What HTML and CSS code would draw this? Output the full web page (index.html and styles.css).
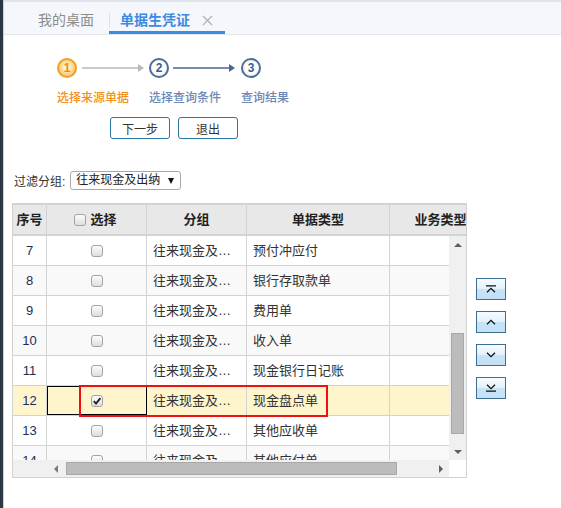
FILE: index.html
```html
<!DOCTYPE html>
<html lang="zh-CN">
<head>
<meta charset="utf-8">
<title>单据生凭证</title>
<link rel="stylesheet" href="styles.css">
</head>
<body>
<div class="app">
  <div class="sidebar"></div>
  <div class="main">
    <div class="tabs">
      <div class="tab">我的桌面</div>
      <div class="tab active">单据生凭证<svg class="close" width="11" height="11" viewBox="0 0 11 11"><path d="M1 1L10 10M10 1L1 10" stroke="#b4b4b4" stroke-width="1.4" fill="none"/></svg></div>
    </div>

    <div class="steps">
      <div class="step-row">
        <span class="circle current">1</span>
        <svg class="conn" width="72" height="20" viewBox="0 0 72 20"><line x1="5" y1="10" x2="62" y2="10" stroke="#b8b8b8" stroke-width="1.5"/><polygon points="61,6 67,10 61,14" fill="#b8b8b8"/></svg>
        <span class="circle">2</span>
        <svg class="conn" width="72" height="20" viewBox="0 0 72 20"><line x1="4" y1="10" x2="61" y2="10" stroke="#4a6594" stroke-width="1.5"/><polygon points="60,6 66,10 60,14" fill="#4a6594"/></svg>
        <span class="circle">3</span>
      </div>
      <div class="labels">
        <span class="label current">选择来源单据</span>
        <span class="label">选择查询条件</span>
        <span class="label">查询结果</span>
      </div>
    </div>

    <div class="actions">
      <button class="btn">下一步</button>
      <button class="btn">退出</button>
    </div>

    <div class="filter">
      <span class="filter-label">过滤分组:</span>
      <div class="select">往来现金及出纳<span class="caret"></span></div>
    </div>

    <div class="grid-area">
      <div class="grid">
        <div class="row head">
          <div class="cell c-no">序号</div>
          <div class="cell c-chk"><span class="cb"></span>选择</div>
          <div class="cell c-grp">分组</div>
          <div class="cell c-type">单据类型</div>
          <div class="cell c-biz">业务类型</div>
        </div>
        <div class="grid-main">
          <div class="grid-body">
            <div class="row"><div class="cell c-no num">7</div><div class="cell c-chk"><span class="cb"></span></div><div class="cell c-grp txt">往来现金及出纳</div><div class="cell c-type txt">预付冲应付</div><div class="cell c-biz"></div></div>
            <div class="row alt"><div class="cell c-no num">8</div><div class="cell c-chk"><span class="cb"></span></div><div class="cell c-grp txt">往来现金及出纳</div><div class="cell c-type txt">银行存取款单</div><div class="cell c-biz"></div></div>
            <div class="row"><div class="cell c-no num">9</div><div class="cell c-chk"><span class="cb"></span></div><div class="cell c-grp txt">往来现金及出纳</div><div class="cell c-type txt">费用单</div><div class="cell c-biz"></div></div>
            <div class="row alt"><div class="cell c-no num">10</div><div class="cell c-chk"><span class="cb"></span></div><div class="cell c-grp txt">往来现金及出纳</div><div class="cell c-type txt">收入单</div><div class="cell c-biz"></div></div>
            <div class="row"><div class="cell c-no num">11</div><div class="cell c-chk"><span class="cb"></span></div><div class="cell c-grp txt">往来现金及出纳</div><div class="cell c-type txt">现金银行日记账</div><div class="cell c-biz"></div></div>
            <div class="row selected"><div class="cell c-no num">12</div><div class="cell c-chk focus"><span class="cb checked"><svg width="10" height="10" viewBox="0 0 10 10"><path d="M1.8 5.2L4 7.6L8.4 2.2" stroke="#222" stroke-width="1.9" fill="none"/></svg></span></div><div class="cell c-grp txt">往来现金及出纳</div><div class="cell c-type txt">现金盘点单</div><div class="cell c-biz"></div></div>
            <div class="row"><div class="cell c-no num">13</div><div class="cell c-chk"><span class="cb"></span></div><div class="cell c-grp txt">往来现金及出纳</div><div class="cell c-type txt">其他应收单</div><div class="cell c-biz"></div></div>
            <div class="row alt"><div class="cell c-no num">14</div><div class="cell c-chk"><span class="cb"></span></div><div class="cell c-grp txt">往来现金及出纳</div><div class="cell c-type txt">其他应付单</div><div class="cell c-biz"></div></div>
          </div>
          <div class="vscroll">
            <div class="sb-btn"><span class="tri up"></span></div>
            <div class="sb-track"><div class="vthumb"></div></div>
            <div class="sb-btn"><span class="tri down"></span></div>
          </div>
        </div>
        <div class="grid-foot">
          <div class="hscroll">
            <div class="frozen"></div>
            <div class="sb-btn h"><span class="tri left"></span></div>
            <div class="sb-track h"><div class="hthumb"></div></div>
            <div class="sb-btn h"><span class="tri right"></span></div>
          </div>
          <div class="corner"></div>
        </div>
        <div class="mark"></div>
      </div>

      <div class="movers">
        <button class="mv"><svg width="12" height="8" viewBox="0 0 12 8"><path d="M1 0.8H11M2 7.3L6 3.3L10 7.3" stroke="#111" stroke-width="1.3" fill="none"/></svg></button>
        <button class="mv"><svg width="12" height="8" viewBox="0 0 12 8"><path d="M2 6.3L6 2.3L10 6.3" stroke="#111" stroke-width="1.3" fill="none"/></svg></button>
        <button class="mv"><svg width="12" height="8" viewBox="0 0 12 8"><path d="M2 1.7L6 5.7L10 1.7" stroke="#111" stroke-width="1.3" fill="none"/></svg></button>
        <button class="mv"><svg width="12" height="8" viewBox="0 0 12 8"><path d="M2 0.7L6 4.7L10 0.7M1 7.2H11" stroke="#111" stroke-width="1.3" fill="none"/></svg></button>
      </div>
    </div>
  </div>
</div>
</body>
</html>
```

FILE: styles.css
```css
* { box-sizing: border-box; }

body {
  margin: 0;
  font-family: "Liberation Sans", "Noto Sans CJK SC", sans-serif;
  font-size: 13px;
  color: #333;
  background: #fff;
}

.app {
  display: flex;
  min-height: 508px;
}

.sidebar {
  width: 4px;
  flex: none;
  background: linear-gradient(to right, #2c3744 3px, #cfd3d8 3px);
}

.main {
  flex: 1;
  display: flex;
  flex-direction: column;
}

/* tabs */
.tabs {
  display: flex;
  height: 35px;
  border-top: 2px solid #e1e4e8;
  border-bottom: 1px solid #e3e7ec;
  background: #f4f7fb;
}

.tab {
  height: 32px;
  padding-top: 8px;
  line-height: 20px;
  font-size: 14px;
  color: #8c8c8c;
  margin-left: 34px;
  padding-right: 15px;
  position: relative;
}

.tab.active {
  margin-left: 0;
  padding-left: 11px;
  padding-right: 12px;
  color: #3b8be2;
  font-weight: bold;
  border-bottom: 3px solid #3b8be2;
  display: flex;
  align-items: flex-start;
}

.tab.active::before {
  content: "";
  position: absolute;
  left: 0;
  top: 11px;
  height: 15px;
  border-left: 1px solid #dcdfe4;
}

.close {
  margin-left: 12px;
  margin-top: 5px;
}

/* steps */
.steps {
  margin-top: 23px;
  margin-left: 53px;
}

.step-row {
  display: flex;
  align-items: center;
  height: 20px;
}

.circle {
  width: 20px;
  height: 20px;
  border-radius: 50%;
  border: 2px solid #4d6b9c;
  background: radial-gradient(circle at 50% 45%, #ffffff 40%, #e3eaf5 100%);
  color: #3d5a8c;
  font-weight: bold;
  font-size: 12px;
  line-height: 16px;
  text-align: center;
}

.circle.current {
  border-color: #f0a02a;
  background: radial-gradient(circle at 50% 45%, #fff2cc 20%, #f9c45a 80%, #f3a93a 100%);
  color: #e88a14;
}

.conn { display: block; flex: none; }

.labels {
  display: flex;
  margin-top: 12px;
  line-height: 16px;
  font-size: 12px;
  font-weight: 500;
}

.label {
  width: 92px;
  color: #6c87b4;
}

.label.current { color: #f39019; }

/* action buttons */
.actions {
  display: flex;
  gap: 8px;
  margin-top: 11px;
  margin-left: 106px;
}

.btn {
  width: 60px;
  height: 22px;
  padding: 0;
  border: 1px solid #2a78a6;
  border-radius: 3px;
  background: #fff;
  font-family: inherit;
  font-size: 12px;
  color: #333;
}

/* filter */
.filter {
  display: flex;
  align-items: center;
  margin-top: 32px;
  margin-left: 10px;
  font-size: 12px;
  height: 19px;
}

.filter-label { margin-right: 5px; }

.select {
  width: 111px;
  height: 19px;
  border: 1px solid #a9a9a9;
  border-radius: 3px;
  padding-left: 5px;
  line-height: 17px;
  display: flex;
  align-items: center;
  color: #222;
}

.caret {
  margin-left: 8px;
  width: 0;
  height: 0;
  border-left: 3px solid transparent;
  border-right: 3px solid transparent;
  border-top: 6px solid #111;
}

/* grid */
.grid-area {
  display: flex;
  margin-top: 13px;
  margin-left: 8px;
}

.grid {
  position: relative;
  width: 455px;
  border: 1px solid #d2d2d2;
  border-top: 2px solid #d2d2d2;
}

.row {
  display: grid;
  grid-template-columns: 34px 100px 100px 143px 102px;
  height: 30px;
  border-bottom: 1px solid #d3d3d3;
  background: #fff;
  white-space: nowrap;
}

.row.alt { background: #f9f9f9; }
.row.selected { background: #fef5cd; }

.row.head {
  height: 31px;
  border-bottom: 2px solid #d3d3d3;
  background: #e8e8e8;
  overflow: hidden;
  font-weight: bold;
  color: #222;
}

.cell {
  border-right: 1px solid #d3d3d3;
  line-height: 29px;
  overflow: hidden;
}

.head .cell {
  text-align: center;
  display: flex;
  align-items: center;
  justify-content: center;
  gap: 4px;
}

.head .c-chk { padding-right: 2px; }

.c-no.num {
  text-align: center;
  color: #1e2c52;
}

.c-chk {
  display: flex;
  align-items: center;
  justify-content: center;
}

.c-chk.focus {
  outline: 1px solid #000;
  outline-offset: -1px;
}

.txt {
  padding-left: 6px;
  padding-right: 12px;
  text-overflow: ellipsis;
  color: #333;
}

.c-type.txt { padding-right: 4px; }

.cb {
  display: inline-flex;
  align-items: center;
  justify-content: center;
  width: 12px;
  height: 12px;
  border: 1px solid #a3a3a3;
  border-radius: 3px;
  background: linear-gradient(#fcfcfc, #dedede);
}

.grid-main {
  display: flex;
  height: 224px;
}

.grid-body {
  width: 436px;
  overflow: hidden;
}

.vscroll {
  width: 17px;
  background: #f0f0f0;
  display: flex;
  flex-direction: column;
}

.sb-btn {
  height: 17px;
  flex: none;
  display: flex;
  align-items: center;
  justify-content: center;
}

.sb-btn.h {
  width: 17px;
  height: 17px;
}

.sb-track { flex: 1; }

.vthumb {
  margin-top: 80px;
  margin-left: 2px;
  width: 13px;
  height: 101px;
  background: #bcbcbc;
  border: 1px solid #a8a8a8;
}

.tri { width: 0; height: 0; }
.tri.up { border-left: 4px solid transparent; border-right: 4px solid transparent; border-bottom: 4px solid #606060; }
.tri.down { border-left: 4px solid transparent; border-right: 4px solid transparent; border-top: 4px solid #606060; }
.tri.left { border-top: 4px solid transparent; border-bottom: 4px solid transparent; border-right: 4px solid #7a7a7a; }
.tri.right { border-top: 4px solid transparent; border-bottom: 4px solid transparent; border-left: 4px solid #606060; }

.grid-foot {
  display: flex;
  height: 17px;
}

.hscroll {
  width: 436px;
  display: flex;
  background: #f0f0f0;
}

.frozen { width: 34px; }

.hthumb {
  margin-top: 2px;
  margin-left: 2px;
  width: 331px;
  height: 13px;
  background: #bcbcbc;
  border: 1px solid #a8a8a8;
}

.corner {
  width: 17px;
  background: #fff;
}

.mark {
  position: absolute;
  left: 66px;
  top: 180px;
  width: 249px;
  height: 32px;
  border: 2px solid #ee1111;
  pointer-events: none;
}

/* move buttons */
.movers {
  display: flex;
  flex-direction: column;
  gap: 11px;
  padding-top: 75px;
  margin-left: 9px;
}

.mv {
  width: 30px;
  height: 22px;
  padding: 0;
  border: 1px solid #3d6f93;
  background: linear-gradient(#f6fbff 0%, #e3f1fb 48%, #c7e3f6 52%, #c3e0f5 100%);
  display: flex;
  align-items: center;
  justify-content: center;
}
```
